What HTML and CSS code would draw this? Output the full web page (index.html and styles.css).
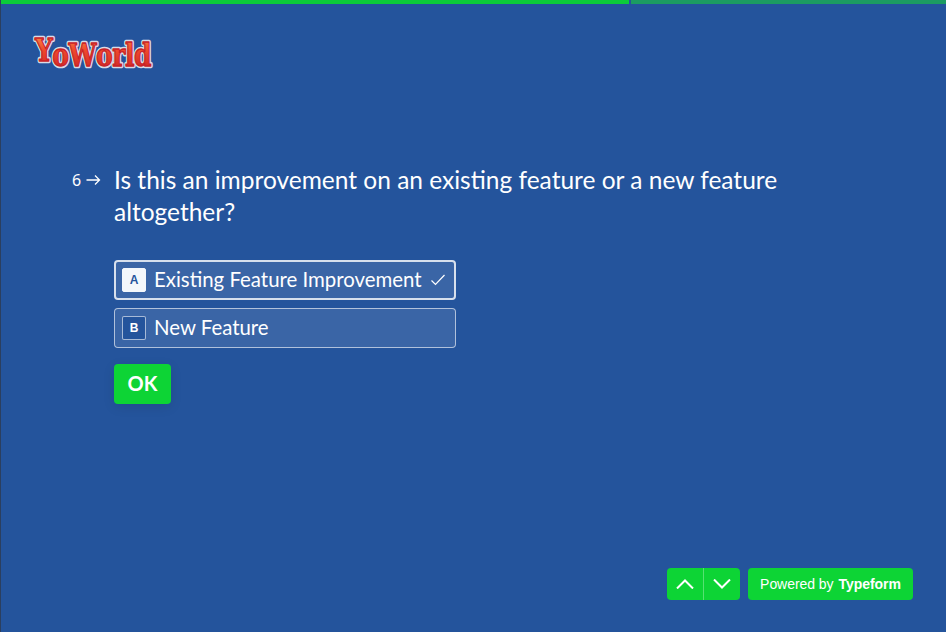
FILE: index.html
```html
<!DOCTYPE html>
<html lang="en">
<head>
    <meta charset="UTF-8">
    <title>YoWorld Feedback</title>
    <link rel="stylesheet" href="styles.css">
</head>
<body>
    <div class="progress">
        <div class="progress-done"></div>
        <div class="progress-left"></div>
    </div>

    <header class="brand">
        <svg class="logo" width="140" height="40" viewBox="0 0 140 40">
            <defs>
                <linearGradient id="logoFill" x1="0" y1="0" x2="0" y2="1">
                    <stop offset="0" stop-color="#fb9a4c"/>
                    <stop offset="0.45" stop-color="#ef4a2c"/>
                    <stop offset="1" stop-color="#c81f25"/>
                </linearGradient>
            </defs>
            <g transform="scale(1 1.280)">
                <text class="logo-edge" x="5" y="21 25 25 25 25 25 25">YoWorld</text>
                <text class="logo-text" x="5" y="21 25 25 25 25 25 25">YoWorld</text>
            </g>
        </svg>
    </header>

    <main class="question">
        <div class="counter">
            <span>6</span>
            <svg width="15" height="12" viewBox="0 0 15 12"><path d="M.5 6h13M9 1.500 13.500 6 9 10.500" fill="none" stroke="#fff" stroke-width="1.300"/></svg>
        </div>
        <div class="body">
            <h1>Is this an improvement on an existing feature or a new feature altogether?</h1>
            <div class="options">
                <div class="option selected">
                    <span class="key">A</span>
                    <span class="label">Existing Feature Improvement</span>
                    <svg class="check" width="16" height="14" viewBox="0 0 16 14"><path d="M1.500 7.500 5.500 11.500 14.500 2" fill="none" stroke="#fff" stroke-width="1.200"/></svg>
                </div>
                <div class="option">
                    <span class="key">B</span>
                    <span class="label">New Feature</span>
                </div>
            </div>
            <button class="ok">OK</button>
        </div>
    </main>

    <footer class="footer">
        <div class="nav">
            <button class="nav-button">
                <svg width="18" height="10" viewBox="0 0 18 10"><path d="M1 9.500 9 1.500l8 8" fill="none" stroke="#fff" stroke-width="2"/></svg>
            </button>
            <button class="nav-button">
                <svg width="18" height="10" viewBox="0 0 18 10"><path d="M1 .5 9 8.500l8-8" fill="none" stroke="#fff" stroke-width="2"/></svg>
            </button>
        </div>
        <div class="powered">Powered by <b>Typeform</b></div>
    </footer>
</body>
</html>
```

FILE: styles.css
```css
:root {
    --blue: #24549c;
    --green: #0dd435;
    --white: #ffffff;
}

* {
    margin: 0;
    padding: 0;
    box-sizing: border-box;
}

body {
    background-color: var(--blue);
    border-left: 1px solid #2b3f5f;
    color: var(--white);
    font-family: 'Lato', sans-serif;
    height: 632px;
    display: flex;
    flex-direction: column;
    overflow: hidden;
}

.progress {
    display: flex;
    gap: 2px;
    height: 4px;
    flex-shrink: 0;
}

.progress-done {
    width: 628px;
    background: #0ccb3a;
}

.progress-left {
    flex: 1;
    background: #1c9c62;
}

.brand {
    padding: 30px 0 0 29px;
    height: 66px;
}

.logo {
    overflow: visible;
}

.logo text {
    font-family: 'DejaVu Serif', serif;
    font-weight: 700;
    font-size: 25px;
    letter-spacing: -0.5px;
    stroke-linejoin: round;
}

.logo-edge {
    fill: #d9dbe6;
    stroke: #d9dbe6;
    stroke-width: 3.500px;
}

.logo-text {
    fill: url(#logoFill);
    stroke: #c92127;
    stroke-width: 1px;
}

.question {
    display: flex;
    padding: 94px 0 0 71px;
    flex: 1;
}

.counter {
    width: 42px;
    display: flex;
    align-items: center;
    gap: 5px;
    height: 20px;
    margin-top: 6px;
    font-family: 'Noto Sans', sans-serif;
    font-size: 16px;
}

.body {
    width: 720px;
}

h1 {
    font-size: 24.500px;
    font-weight: 400;
    line-height: 32px;
    margin-bottom: 32px;
    width: 700px;
}

.options {
    display: flex;
    flex-direction: column;
    gap: 8px;
    width: 342px;
    margin-bottom: 16px;
}

.option {
    display: flex;
    align-items: center;
    height: 40px;
    padding: 0 8px 0 7px;
    border: 1px solid rgba(255, 255, 255, 0.6);
    border-radius: 4px;
    background: rgba(255, 255, 255, 0.1);
    font-size: 20.400px;
}

.option.selected {
    border: 2px solid rgba(255, 255, 255, 0.8);
    padding: 0 8px 0 6px;
}

.key {
    width: 24px;
    height: 24px;
    margin-right: 8px;
    display: flex;
    align-items: center;
    justify-content: center;
    border: 1px solid rgba(255, 255, 255, 0.6);
    border-radius: 2px;
    background: var(--blue);
    font-family: 'Liberation Sans', sans-serif;
    font-size: 12px;
    font-weight: 700;
}

.selected .key {
    background: #f3f7fb;
    border-color: #f3f7fb;
    color: var(--blue);
}

.label {
    flex: 1;
    white-space: nowrap;
    padding-bottom: 3px;
}

.check {
    flex-shrink: 0;
}

.ok {
    width: 57px;
    height: 40px;
    padding-bottom: 3px;
    border: none;
    border-radius: 4px;
    background: var(--green);
    color: var(--white);
    font-family: 'Lato', sans-serif;
    font-size: 20px;
    font-weight: 700;
    box-shadow: 0 3px 12px rgba(0, 0, 0, 0.1);
}

.footer {
    display: flex;
    justify-content: flex-end;
    gap: 8px;
    padding: 0 33px 32px 0;
}

.nav {
    display: flex;
    height: 32px;
    border-radius: 4px;
    overflow: hidden;
}

.nav-button {
    width: 36px;
    border: none;
    background: var(--green);
    display: flex;
    align-items: center;
    justify-content: center;
}

.nav-button + .nav-button {
    width: 37px;
    border-left: 1px solid rgba(255, 255, 255, 0.3);
}

.powered {
    width: 165px;
    height: 32px;
    display: flex;
    align-items: center;
    justify-content: center;
    gap: 5px;
    border-radius: 4px;
    background: var(--green);
    font-family: 'Liberation Sans', sans-serif;
    font-size: 14px;
    letter-spacing: -0.05px;
}
```
